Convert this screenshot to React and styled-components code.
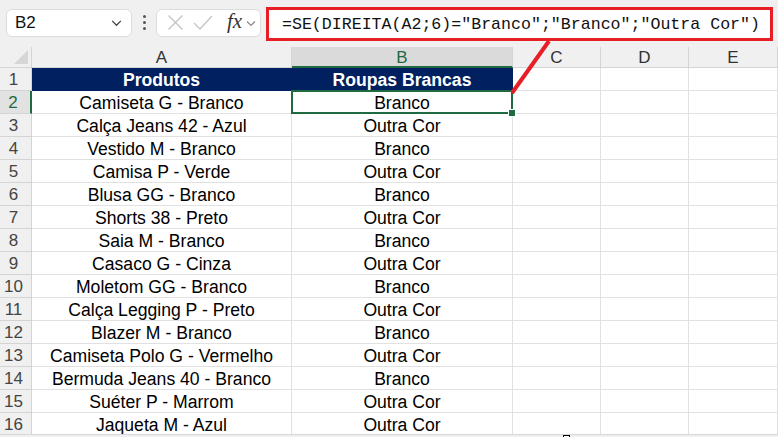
import React from 'react';
import styled, { createGlobalStyle } from 'styled-components';

const GlobalStyle = createGlobalStyle`
   html, body {
      margin: 0;
      padding: 0;
      background: #f0f0f0;
   }
   body {
      font-family: "Liberation Sans", Arial, sans-serif;
      overflow: hidden;
   }
`;

const AppStyle = styled.div`
   position: relative;
   width: 778px;
   height: 437px;
   overflow: hidden;
   background: #f0f0f0;
`;

const Toolbar = styled.div`
   display: flex;
   align-items: center;
   height: 47px;
   padding: 0 5px 0 6px;
   box-sizing: border-box;
   background: #f0f0f0;
`;

const NameBox = styled.div`
   display: flex;
   align-items: center;
   justify-content: space-between;
   width: 126px;
   height: 28px;
   margin-top: -2px;
   padding: 0 8px 0 8px;
   box-sizing: border-box;
   background: #fff;
   border: 1px solid #dcdcdc;
   border-radius: 6px;
   font-size: 17px;
   color: #111;
`;

const Kebab = styled.div`
   display: flex;
   flex-direction: column;
   gap: 3px;
   margin: -2px 10px 0 11px;

   & span {
      width: 3px;
      height: 3px;
      border-radius: 50%;
      background: #555;
   }
`;

const FxBox = styled.div`
   display: flex;
   align-items: center;
   width: 105px;
   height: 28px;
   margin-top: -2px;
   padding: 0 3px 0 10px;
   box-sizing: border-box;
   background: #fff;
   border: 1px solid #dcdcdc;
   border-radius: 6px;
`;

const FxText = styled.span`
   font-family: "Liberation Serif", "Times New Roman", serif;
   font-style: italic;
   font-size: 21px;
   color: #333;
   margin: -3px 3px 0 14px;
`;

const FormulaBox = styled.div`
   display: flex;
   align-items: center;
   margin-left: 5px;
   flex: 1;
   height: 34px;
   margin-top: 1px;
   padding-left: 13px;
   box-sizing: border-box;
   background: #fff;
   border: 3px solid #e81e27;
   font-family: "Liberation Mono", "DejaVu Sans Mono", monospace;
   font-size: 16.6px;
   color: #111;
   white-space: nowrap;
`;

const Sheet = styled.div`
   display: grid;
   grid-template-columns: 32px 260px 221px 88px 88px 89px;
   grid-template-rows: 21px repeat(16, 23px);
   height: 387px;
   overflow: hidden;
   background: #fff;
`;

const Corner = styled.div`
   background: #f0f0f0;
   border-right: 1px solid #d4d4d4;
   border-bottom: 1px solid #d4d4d4;
   box-sizing: border-box;
   display: flex;
   align-items: flex-end;
   justify-content: flex-end;
   padding: 0 3px 3px 0;
`;

const ColHead = styled.div`
   display: flex;
   align-items: center;
   justify-content: center;
   padding-top: 2px;
   box-sizing: border-box;
   font-size: 17px;
   background: ${({ $active }) => ($active ? '#dadada' : '#f0f0f0')};
   color: ${({ $active }) => ($active ? '#1e6b41' : '#333')};
   border-right: 1px solid #d4d4d4;
   border-bottom: ${({ $active }) => ($active ? '2px solid #1e6b41' : '1px solid #d4d4d4')};
`;

const RowHead = styled.div`
   display: flex;
   align-items: center;
   justify-content: center;
   padding: 2px 4px 0 0;
   box-sizing: border-box;
   font-size: 17px;
   background: ${({ $active }) => ($active ? '#e2e2e2' : '#f0f0f0')};
   color: ${({ $active }) => ($active ? '#1e6b41' : '#444')};
   border-right: ${({ $active }) => ($active ? '2px solid #1e6b41' : '1px solid #d4d4d4')};
   border-bottom: 1px solid #d4d4d4;
`;

const Cell = styled.div`
   position: relative;
   display: flex;
   align-items: center;
   justify-content: center;
   padding-top: 2px;
   box-sizing: border-box;
   font-size: 17.6px;
   white-space: nowrap;
   color: ${({ $header }) => ($header ? '#fff' : '#000')};
   font-weight: ${({ $header }) => ($header ? 700 : 400)};
   background: ${({ $header }) => ($header ? '#002060' : '#fff')};
   border-right: 1px solid ${({ $header }) => ($header ? '#002060' : '#e1e1e1')};
   border-bottom: 1px solid ${({ $header }) => ($header ? '#002060' : '#e1e1e1')};

   ${({ $selected }) =>
      $selected &&
      `
      &::after {
         content: '';
         position: absolute;
         left: -1px;
         top: -1px;
         right: -1px;
         bottom: -1px;
         border: 2px solid #1e6b41;
      }
      &::before {
         content: '';
         position: absolute;
         right: -4px;
         bottom: -4px;
         width: 6px;
         height: 6px;
         background: #1e6b41;
         border: 1px solid #fff;
         z-index: 2;
      }
   `}
`;

const Footer = styled.div`
   display: flex;
   height: 3px;
   background: #efefef;
   border-top: 1px solid #d8d8d8;
   box-sizing: border-box;
`;

const Cursor = styled.div`
   margin-left: 563px;
   width: 5px;
   height: 3px;
   border: 1px solid #000;
   border-bottom: none;
   background: #fff;
`;

const Callout = styled.svg`
   position: absolute;
   left: 0;
   top: 0;
   pointer-events: none;
`;

const Chevron = ({ size = 12, color = '#444' }) => (
   <svg width={size} height={size} viewBox="0 0 12 12">
      <path d="M2 4.5 L6 8.5 L10 4.5" fill="none" stroke={color} strokeWidth="1.2" />
   </svg>
);

const columns = ['A', 'B', 'C', 'D', 'E'];

const rows = [
   ['Produtos', 'Roupas Brancas'],
   ['Camiseta G - Branco', 'Branco'],
   ['Calça Jeans 42 - Azul', 'Outra Cor'],
   ['Vestido M - Branco', 'Branco'],
   ['Camisa P - Verde', 'Outra Cor'],
   ['Blusa GG - Branco', 'Branco'],
   ['Shorts 38 - Preto', 'Outra Cor'],
   ['Saia M - Branco', 'Branco'],
   ['Casaco G - Cinza', 'Outra Cor'],
   ['Moletom GG - Branco', 'Branco'],
   ['Calça Legging P - Preto', 'Outra Cor'],
   ['Blazer M - Branco', 'Branco'],
   ['Camiseta Polo G - Vermelho', 'Outra Cor'],
   ['Bermuda Jeans 40 - Branco', 'Branco'],
   ['Suéter P - Marrom', 'Outra Cor'],
   ['Jaqueta M - Azul', 'Outra Cor'],
];

const App = () => {
   return (
      <AppStyle>
         <GlobalStyle />
         <Toolbar>
            <NameBox>
               <span>B2</span>
               <Chevron size={13} />
            </NameBox>
            <Kebab>
               <span />
               <span />
               <span />
            </Kebab>
            <FxBox>
               <svg width="17" height="17" viewBox="0 0 17 17">
                  <path d="M1.5 1.5 L15.5 15.5 M15.5 1.5 L1.5 15.5" stroke="#c4c4c4" strokeWidth="1.3" />
               </svg>
               <svg width="20" height="17" viewBox="0 0 20 17" style={{ marginLeft: 9 }}>
                  <path d="M1 9 L7 15 L19 2" fill="none" stroke="#c4c4c4" strokeWidth="1.3" />
               </svg>
               <FxText>fx</FxText>
               <Chevron size={12} color="#888" />
            </FxBox>
            <FormulaBox>=SE(DIREITA(A2;6)="Branco";"Branco";"Outra Cor")</FormulaBox>
         </Toolbar>
         <Sheet>
            <Corner>
               <svg width="14" height="14" viewBox="0 0 14 14">
                  <path d="M14 0 L14 14 L0 14 Z" fill="#d6d6d6" />
               </svg>
            </Corner>
            {columns.map((c) => (
               <ColHead key={c} $active={c === 'B'}>
                  {c}
               </ColHead>
            ))}
            {rows.map(([a, b], i) => (
               <React.Fragment key={i}>
                  <RowHead $active={i === 1}>{i + 1}</RowHead>
                  <Cell $header={i === 0}>{a}</Cell>
                  <Cell $header={i === 0} $selected={i === 1}>
                     {b}
                  </Cell>
                  <Cell />
                  <Cell />
                  <Cell />
               </React.Fragment>
            ))}
         </Sheet>
         <Footer>
            <Cursor />
         </Footer>
         <Callout width="778" height="437">
            <line x1="549" y1="41" x2="512" y2="93" stroke="#e81e27" strokeWidth="4" />
         </Callout>
      </AppStyle>
   );
};

export default App;
